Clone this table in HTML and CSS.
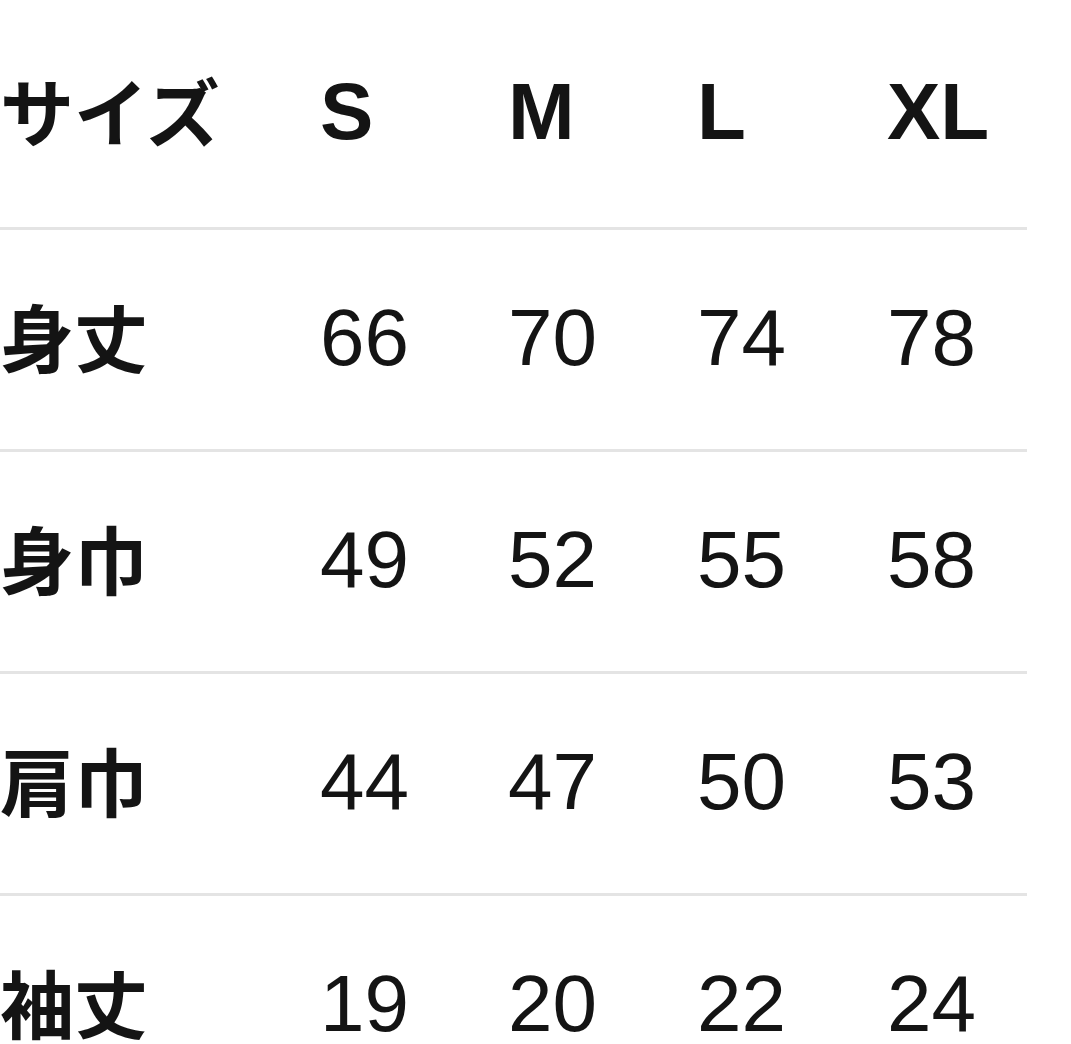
FILE: index.html
```html
<!DOCTYPE html>
<html lang="ja">
<head>
<meta charset="utf-8">
<title>サイズ表</title>
<link rel="stylesheet" href="styles.css">
</head>
<body>
<div class="size-table">
  <div class="row head">
    <div class="cell label">サイズ</div>
    <div class="cell">S</div>
    <div class="cell">M</div>
    <div class="cell">L</div>
    <div class="cell">XL</div>
  </div>
  <div class="row">
    <div class="cell label">身丈</div>
    <div class="cell">66</div>
    <div class="cell">70</div>
    <div class="cell">74</div>
    <div class="cell">78</div>
  </div>
  <div class="row">
    <div class="cell label">身巾</div>
    <div class="cell">49</div>
    <div class="cell">52</div>
    <div class="cell">55</div>
    <div class="cell">58</div>
  </div>
  <div class="row">
    <div class="cell label">肩巾</div>
    <div class="cell">44</div>
    <div class="cell">47</div>
    <div class="cell">50</div>
    <div class="cell">53</div>
  </div>
  <div class="row">
    <div class="cell label">袖丈</div>
    <div class="cell">19</div>
    <div class="cell">20</div>
    <div class="cell">22</div>
    <div class="cell">24</div>
  </div>
</div>
</body>
</html>
```

FILE: styles.css
```css
html, body {
  margin: 0;
  padding: 0;
  background: #ffffff;
  overflow: hidden;
}

body {
  font-family: "Liberation Sans", "Noto Sans CJK JP", sans-serif;
  color: #141414;
}

.size-table {
  width: 1027px;
  display: flex;
  flex-direction: column;
}

.row {
  display: grid;
  grid-template-columns: 320px 188px 189px 190px 140px;
  align-items: center;
  height: 219px;
  border-top: 3px solid #e4e4e4;
}

.row.head {
  height: 227px;
  border-top: none;
  font-weight: bold;
}

.cell {
  font-size: 80px;
  line-height: 0.85;
  white-space: nowrap;
  padding-bottom: 3px;
}

.label {
  font-family: "Noto Sans CJK JP", sans-serif;
  font-weight: bold;
  font-size: 74px;
  padding-bottom: 8px;
}
```
